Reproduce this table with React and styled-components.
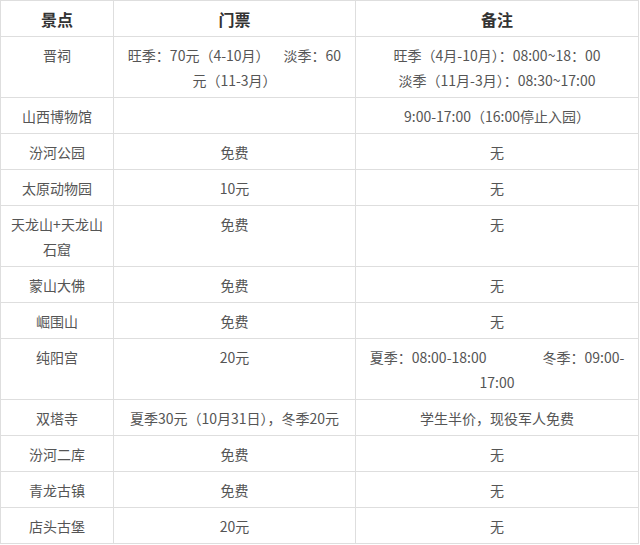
import React from "react";
import styled, { createGlobalStyle } from "styled-components";

const GlobalStyle = createGlobalStyle`
    body {
        margin: 0;
        background: #fff;
        font-family: "Noto Sans CJK SC", "Liberation Sans", sans-serif;
    }
`;

const TableStyle = styled.table`
    width: 638px;
    table-layout: fixed;
    border-collapse: collapse;
    color: #555;
    font-size: 14px;
    line-height: 25px;
`;

const Col = styled.col`
    width: ${(props) => props.$w}px;
`;

const HeadCell = styled.th`
    border: 1px solid #dedede;
    padding: 6px 8px 4px;
    color: #333;
    font-size: 16px;
    font-weight: bold;
    text-align: center;
`;

const Cell = styled.td`
    border: 1px solid #dedede;
    padding: 6px 8px 4px;
    text-align: center;
    vertical-align: top;
    white-space: nowrap;
`;

const Gap = styled.span`
    display: inline-block;
    width: ${(props) => props.$w}px;
`;

// rows of the sights table
const rows = [
    {
        name: "晋祠",
        ticket: (
            <>
                旺季：70元（4-10月）<Gap $w={14} />淡季：60
                <br />
                元（11-3月）
            </>
        ),
        note: (
            <>
                旺季（4月-10月）：08:00~18：00
                <br />
                淡季（11月-3月）：08:30~17:00
            </>
        ),
    },
    { name: "山西博物馆", ticket: "", note: "9:00-17:00（16:00停止入园）" },
    { name: "汾河公园", ticket: "免费", note: "无" },
    { name: "太原动物园", ticket: "10元", note: "无" },
    {
        name: (
            <>
                天龙山+天龙山
                <br />
                石窟
            </>
        ),
        ticket: "免费",
        note: "无",
    },
    { name: "蒙山大佛", ticket: "免费", note: "无" },
    { name: "崛围山", ticket: "免费", note: "无" },
    {
        name: "纯阳宫",
        ticket: "20元",
        note: (
            <>
                夏季：08:00-18:00<Gap $w={56} />冬季：09:00-
                <br />
                17:00
            </>
        ),
    },
    { name: "双塔寺", ticket: "夏季30元（10月31日），冬季20元", note: "学生半价，现役军人免费" },
    { name: "汾河二库", ticket: "免费", note: "无" },
    { name: "青龙古镇", ticket: "免费", note: "无" },
    { name: "店头古堡", ticket: "20元", note: "无" },
];

const App = () => {
    return (
        <>
            <GlobalStyle />
            <TableStyle>
                <colgroup>
                    <Col $w={113} />
                    <Col $w={242} />
                    <Col $w={283} />
                </colgroup>
                <thead>
                    <tr>
                        <HeadCell>景点</HeadCell>
                        <HeadCell>门票</HeadCell>
                        <HeadCell>备注</HeadCell>
                    </tr>
                </thead>
                <tbody>
                    {rows.map((row, i) => (
                        <tr key={i}>
                            <Cell>{row.name}</Cell>
                            <Cell>{row.ticket}</Cell>
                            <Cell>{row.note}</Cell>
                        </tr>
                    ))}
                </tbody>
            </TableStyle>
        </>
    );
};

export default App;
